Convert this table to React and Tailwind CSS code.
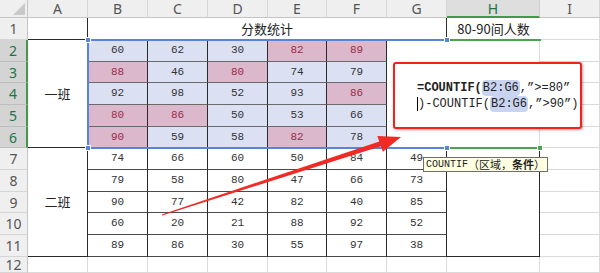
const cols = ["A", "B", "C", "D", "E", "F", "G", "H", "I"];

// rows 2-6, B..F ; p = pink highlighted
const topRows = [
  [["60"], ["62"], ["30"], ["82", 1], ["89", 1]],
  [["88", 1], ["46"], ["80", 1], ["74"], ["79"]],
  [["92"], ["98"], ["52"], ["93"], ["86", 1]],
  [["80", 1], ["86", 1], ["50"], ["53"], ["66"]],
  [["90", 1], ["59"], ["58"], ["82", 1], ["78"]],
];

// rows 7-11, B..G
const bottomRows = [
  ["74", "66", "60", "50", "84", "49"],
  ["79", "58", "80", "47", "66", "73"],
  ["90", "77", "42", "82", "40", "85"],
  ["60", "20", "21", "88", "92", "52"],
  ["89", "86", "30", "55", "97", "38"],
];

const num = "flex items-center justify-center font-['Liberation_Mono',monospace] text-[11px] text-[#333]";
const cjk = "font-['Noto_Sans_CJK_SC','Noto_Sans',sans-serif] text-[13px] text-[#222]";
const grid = "border-r border-b border-[#dadada]";

function RowHead({ n, active }) {
  return active ? (
    <div className="flex items-center justify-center bg-[#d4d4d4] border-r-2 border-r-[#3f9a4a] border-b border-b-[#bdbdbd] font-['Noto_Sans',sans-serif] text-[14px] text-[#217346]">
      {n}
    </div>
  ) : (
    <div className="flex items-center justify-center bg-[#efefef] border-r border-r-[#c4c4c4] border-b border-b-[#d6d6d6] font-['Noto_Sans',sans-serif] text-[14px] text-[#555]">
      {n}
    </div>
  );
}

export default function App() {
  return (
    <div className="relative w-[600px] h-[273px] overflow-hidden bg-white">
      <div className="grid grid-cols-[28px_60px_60px_60px_60px_59px_60px_60px_93px_60px] grid-rows-[18px_22px_22px_21px_22px_22px_21px_22px_22px_21px_22px_22px_16px]">
        {/* column headers */}
        <div className="relative bg-[#efefef] border-r border-b border-[#c4c4c4]">
          <svg className="absolute right-[2px] bottom-[2px]" width="12" height="12" viewBox="0 0 12 12">
            <polygon points="12,0 12,12 0,12" fill="#c9c9c9" />
          </svg>
        </div>
        {cols.map((c) =>
          c === "H" ? (
            <div key={c} className="flex items-center justify-center bg-[#dedede] border-r border-r-[#d0d0d0] border-b-2 border-b-[#3f9a4a] font-['Noto_Sans',sans-serif] text-[14px] text-[#217346]">
              {c}
            </div>
          ) : (
            <div key={c} className="flex items-center justify-center bg-[#efefef] border-r border-r-[#d6d6d6] border-b border-b-[#c4c4c4] font-['Noto_Sans',sans-serif] text-[14px] text-[#555]">
              {c}
            </div>
          )
        )}

        {/* row 1 */}
        <RowHead n="1" />
        <div className="border-r border-b border-[#2a2a2a]" />
        <div className={`col-span-6 flex items-center justify-center border-r border-r-[#2a2a2a] border-b border-b-[#2a2a2a] ${cjk}`}>
          分数统计
        </div>
        <div className={`flex items-center justify-center ${cjk}`}>80-90间人数</div>
        <div className={grid} />

        {/* rows 2-6 */}
        {topRows.map((row, i) => (
          <>
            <RowHead key={"h" + i} n={i + 2} active />
            {i === 0 && (
              <div className={`row-span-5 flex items-center justify-center border-r border-b border-[#2a2a2a] ${cjk}`}>一班</div>
            )}
            {row.map(([v, p], j) =>
              p ? (
                <div key={j} className="flex items-center justify-center bg-[#dbb8cb] border-r border-r-[#2a2a2a] border-b border-b-[#6a6a6a] font-['Liberation_Mono',monospace] text-[11px] text-[#9c2b47]">
                  {v}
                </div>
              ) : (
                <div key={j} className={`bg-[#dbe1f3] border-r border-r-[#2a2a2a] border-b border-b-[#6a6a6a] ${num}`}>
                  {v}
                </div>
              )
            )}
            {i === 0 && <div className="row-span-5 border-b border-b-[#2a2a2a]" />}
            {i === 0 && <div className="row-span-5 border-r border-r-[#dadada] border-b border-b-[#2a2a2a]" />}
            <div className={grid} />
          </>
        ))}

        {/* rows 7-11 */}
        {bottomRows.map((row, i) => (
          <>
            <RowHead key={"b" + i} n={i + 7} />
            {i === 0 && (
              <div className={`row-span-5 flex items-center justify-center border-r border-b border-[#2a2a2a] ${cjk}`}>二班</div>
            )}
            {row.map((v, j) => (
              <div key={j} className={`border-r border-r-[#2a2a2a] border-b border-b-[#4a4a4a] ${num}`}>
                {v}
              </div>
            ))}
            {i === 0 && <div className="row-span-5 border-r border-b border-[#2a2a2a]" />}
            <div className={grid} />
          </>
        ))}

        {/* row 12 */}
        <RowHead n="12" />
        {cols.map((c) => (
          <div key={c} className={grid} />
        ))}
      </div>

      {/* reference selection B2:G6 */}
      <div className="absolute left-[87px] top-[39px] w-[361px] h-[110px] border-l-2 border-t-2 border-b-2 border-[#5a84d8] pointer-events-none" />
      {/* active cell H2:H6 */}
      <div className="absolute left-[448px] top-[39px] w-[93px] h-[110px] border-t-2 border-b-2 border-[#4aa352] pointer-events-none" />
      <div className="absolute left-[85px] top-[37px] w-[6px] h-[6px] bg-[#5a84d8] border border-white" />
      <div className="absolute left-[85px] top-[145px] w-[6px] h-[6px] bg-[#5a84d8] border border-white" />
      <div className="absolute left-[444px] top-[37px] w-[6px] h-[6px] bg-[#5a84d8] border border-white" />
      <div className="absolute left-[444px] top-[145px] w-[6px] h-[6px] bg-[#5a84d8] border border-white" />
      <div className="absolute left-[537px] top-[145px] w-[6px] h-[6px] bg-[#4aa352] border border-white" />

      {/* formula callout */}
      <div className="absolute left-[393px] top-[62px] w-[189px] h-[67px] bg-white border-2 border-[#f4201c] rounded-[3px] shadow-[1px_1px_3px_rgba(0,0,0,0.35)] flex flex-col pl-[22px] pt-[16px] font-['Liberation_Mono',monospace] text-[12px] leading-[16px] text-[#222]">
        <div className="flex items-center whitespace-pre">
          <span className="font-bold">=COUNTIF(</span>
          <span className="bg-[#c9d5f0] rounded-[4px] px-[1px]">B2:G6</span>
          <span>,”&gt;=80”</span>
        </div>
        <div className="flex items-center whitespace-pre">
          <span className="inline-block w-[1px] h-[14px] bg-black" />
          <span>)-COUNTIF(</span>
          <span className="bg-[#c9d5f0] rounded-[4px] px-[1px]">B2:G6</span>
          <span>,”&gt;90”)</span>
        </div>
      </div>

      {/* tooltip */}
      <div className="absolute left-[423px] top-[157px] h-[15px] px-[2px] flex items-center bg-[#ffffe1] border border-[#6e6e6e] font-['Liberation_Mono',monospace] text-[10px] text-[#222] whitespace-pre">
        COUNTIF<span className="font-['Noto_Sans_CJK_SC',sans-serif] text-[11px]">（区域，<b>条件</b>）</span>
      </div>

      {/* arrow */}
      <svg className="absolute left-0 top-0 pointer-events-none" width="600" height="273" viewBox="0 0 600 273">
        <polygon
          points="161.8,214.4 379.3,141.4 377.3,135.9 401,137 382.9,151.7 380.9,146.2 162.2,215.6"
          fill="#f02a24"
        />
      </svg>
    </div>
  );
}
